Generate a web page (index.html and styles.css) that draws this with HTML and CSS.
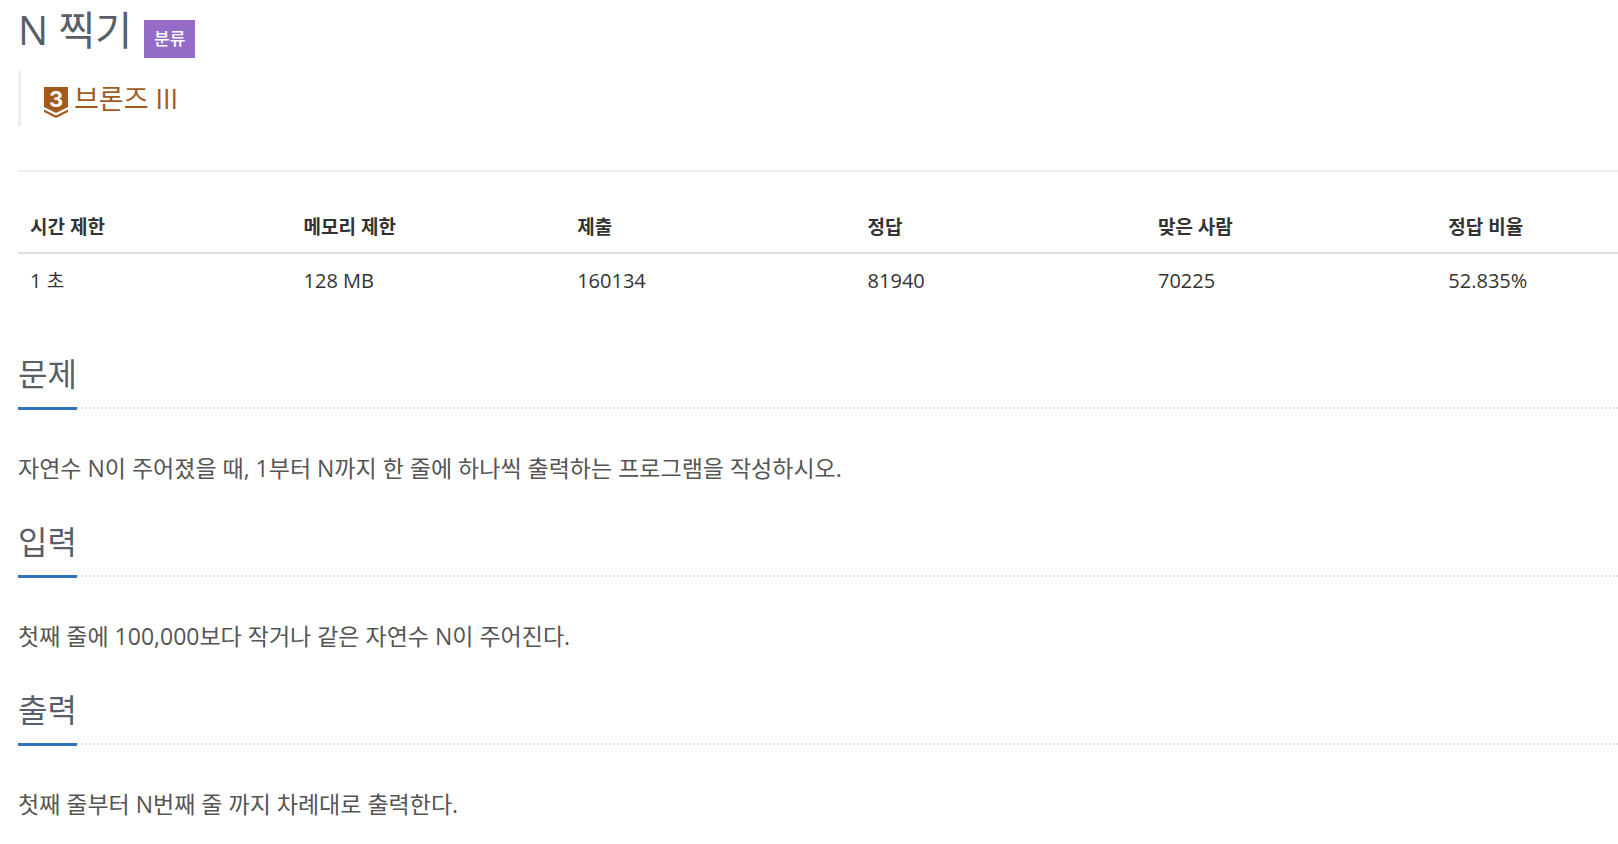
FILE: index.html
```html
<!DOCTYPE html>
<html lang="ko">
<head>
  <meta charset="UTF-8">
  <meta name="viewport" content="width=device-width, initial-scale=1.0">
  <title>N 찍기</title>
  <link rel="stylesheet" href="styles.css">
</head>
<body>
  <header class="page-header">
    <div class="title-row">
      <h1>N 찍기</h1>
      <button type="button" class="label">분류</button>
    </div>
    <blockquote class="tier">
      <svg class="tier-icon" viewBox="0 0 24 31" width="24" height="31" aria-hidden="true">
        <path fill="#a3591b" d="M0 0h24v20l-12 6-12-6z"/>
        <path fill="#a3591b" d="M0 22.5l12 6 12-6v2.6l-12 5.9-12-5.9z"/>
        <text x="12" y="20" text-anchor="middle" class="tier-number">3</text>
      </svg>
      <span>브론즈 III</span>
    </blockquote>
  </header>

  <table class="problem-info">
    <thead>
      <tr>
        <th class="limit">시간 제한</th>
        <th class="limit">메모리 제한</th>
        <th class="count">제출</th>
        <th class="count">정답</th>
        <th class="count">맞은 사람</th>
        <th>정답 비율</th>
      </tr>
    </thead>
    <tbody>
      <tr>
        <td>1 <span class="unit">초</span></td>
        <td>128 MB</td>
        <td>160134</td>
        <td>81940</td>
        <td>70225</td>
        <td>52.835%</td>
      </tr>
    </tbody>
  </table>

  <section>
    <div class="headline"><h2>문제</h2></div>
    <p>자연수 N이 주어졌을 때, 1부터 N까지 한 줄에 하나씩 출력하는 프로그램을 작성하시오.</p>
  </section>

  <section>
    <div class="headline"><h2>입력</h2></div>
    <p>첫째 줄에 100,000보다 작거나 같은 자연수 N이 주어진다.</p>
  </section>

  <section>
    <div class="headline"><h2>출력</h2></div>
    <p>첫째 줄부터 N번째 줄 까지 차례대로 출력한다.</p>
  </section>
</body>
</html>
```
FILE: styles.css
```css
body {
  font-family: "Open Sans", "Noto Sans CJK KR", sans-serif;
  background-color: #fff;
  color: #333;
  margin: 0;
  padding: 0 0 0 18px;
}

h1,
h2 {
  font-weight: 400;
  color: #585f69;
  margin: 0;
}

.page-header {
  border-bottom: 2px solid #eee;
  padding-bottom: 44px;
}

.title-row {
  display: flex;
  align-items: flex-end;
  gap: 12px;
  height: 58px;
}

h1 {
  font-size: 40px;
  line-height: 56px;
}

.label {
  font-family: inherit;
  font-size: 17px;
  font-weight: 500;
  line-height: 38px;
  color: #fff;
  background-color: #946cc7;
  border: none;
  padding: 0 10px;
  cursor: pointer;
}

.tier {
  display: flex;
  align-items: center;
  gap: 6px;
  margin: 13px 0 0;
  padding-left: 23px;
  border-left: 3px solid #eee;
  font-size: 27px;
  line-height: 55px;
  color: #a3591b;
}

.tier-icon {
  margin-top: 8px;
  overflow: visible;
}

.tier-number {
  font-family: Inter, sans-serif;
  font-size: 22px;
  line-height: 22px;
  font-weight: 700;
  fill: #fff;
}

.problem-info {
  width: 100%;
  margin: 28px 0 44px;
  border-collapse: collapse;
  table-layout: fixed;
}

.problem-info th,
.problem-info td {
  padding: 13px 12px 11px;
  text-align: left;
  font-size: 20px;
  line-height: 28px;
}

.problem-info th {
  font-size: 19px;
  border-bottom: 2px solid #ddd;
}

.problem-info .unit {
  font-size: 19px;
}

.limit {
  width: 17.1%;
  box-sizing: border-box;
}

.count {
  width: 18.15%;
  box-sizing: border-box;
}

.headline {
  display: flex;
  border-bottom: 2px dotted #e4e5f0;
}

h2 {
  font-size: 32px;
  line-height: 48px;
  padding-bottom: 9px;
  margin-bottom: -3px;
  border-bottom: 3px solid #3174bc;
}

p {
  margin: 41px 0 32px;
  font-size: 23px;
  line-height: 36px;
  color: #555;
}
```
